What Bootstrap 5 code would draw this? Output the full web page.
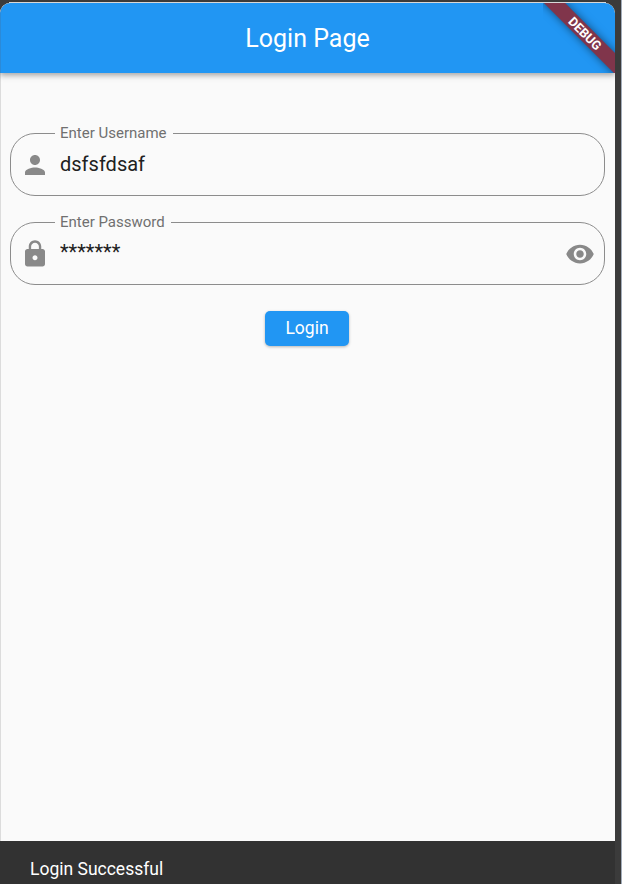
<!DOCTYPE html>
<html lang="en">
<head>
<meta charset="utf-8">
<meta name="viewport" content="width=device-width, initial-scale=1">
<title>Login Page</title>
<link href="https://cdn.jsdelivr.net/npm/bootstrap@5.3.0/dist/css/bootstrap.min.css" rel="stylesheet">
<style>
  html, body { height: 100%; }
  body { font-family: Roboto, "Liberation Sans", sans-serif; background: #3b3b3b; border-right: 1px solid #a3adba; padding: 2px 6px 0 0; line-height: 1.2; }
  .app-window { background: linear-gradient(90deg, transparent 9px, #d8d8d8 9px, #d8d8d8 calc(100% - 9px), transparent calc(100% - 9px)) top / 100% 1px no-repeat; padding-top: 1px; }
  .app-page { background: #fafafa; border-radius: 10px 10px 0 0; box-shadow: inset 1px 0 #dcdcdc; }
  .app-bar { height: 70px; background: #2196f3; border-radius: 10px 10px 0 0; box-shadow: 0 2px 5px rgba(0,0,0,.25), 0 4px 6px rgba(0,0,0,.1); border-left: 1px solid #2b8ad8; }
  .app-title { font-size: 25px; font-weight: 400; padding: 2px 1px 0 0; }
  .debug-clip { width: 72px; height: 70px; border-top-right-radius: 10px; }
  .debug-band { width: 110px; height: 15px; left: -13px; top: 22.5px; transform: rotate(45deg); background: #80354b; box-shadow: 0 0 8px rgba(0,0,0,.5); font-size: 12.75px; font-weight: 700; line-height: 15px; }
  .login-form { padding: 60px 10px 0; }
  .field { height: 63px; border: 1px solid #8c8c8c; border-radius: 25px; padding: 0 9px; margin-bottom: 26px; }
  .field-label { left: 44px; top: -10px; padding: 0 6px 0 5px; font-size: 15px; line-height: 18px; color: #707070; background: #fafafa; }
  .field .form-control { font-size: 20px; line-height: 24px; color: #212121; border: 0; background: transparent; box-shadow: none; padding: 0 0 1px 10px; }
  .field #password { padding-bottom: 3px; }
  .field svg { width: 30px; height: 30px; fill: #898989; flex: none; position: relative; top: .5px; }
  .btn-login { width: 84px; height: 35px; margin-right: 1px; margin-top: -.5px; background: #2196f3; color: #fff; font-size: 17.5px; border-radius: 5px; box-shadow: 0 1px 3px rgba(0,0,0,.28); }
  .snack { height: 43px; background: #323232; padding: 18px 30px 0; font-size: 17.5px; line-height: 21px; }
</style>
</head>
<body>
<div class="app-window h-100">
  <div class="app-page h-100 d-flex flex-column overflow-hidden">
    <header class="app-bar position-relative d-flex align-items-center justify-content-center text-white flex-shrink-0">
      <h1 class="app-title m-0">Login Page</h1>
      <div class="debug-clip position-absolute top-0 end-0 overflow-hidden">
        <div class="debug-band position-absolute text-center">DEBUG</div>
      </div>
    </header>
    <main class="flex-grow-1">
      <form class="login-form">
        <div class="field position-relative d-flex align-items-center">
          <label class="field-label position-absolute" for="username">Enter Username</label>
          <svg viewBox="0 0 24 24"><path d="M12 12c2.210 0 4-1.790 4-4s-1.790-4-4-4-4 1.790-4 4 1.790 4 4 4zm0 2c-2.670 0-8 1.340-8 4v2h16v-2c0-2.660-5.330-4-8-4z"/></svg>
          <input id="username" class="form-control" type="text" value="dsfsfdsaf">
        </div>
        <div class="field position-relative d-flex align-items-center">
          <label class="field-label position-absolute" for="password">Enter Password</label>
          <svg viewBox="0 0 24 24"><path d="M18 8h-1V6c0-2.760-2.240-5-5-5S7 3.240 7 6v2H6c-1.100 0-2 .9-2 2v10c0 1.100.9 2 2 2h12c1.100 0 2-.9 2-2V10c0-1.100-.9-2-2-2zm-6 9c-1.100 0-2-.9-2-2s.9-2 2-2 2 .9 2 2-.9 2-2 2zm3.100-9H8.900V6c0-1.710 1.390-3.100 3.100-3.100s3.100 1.390 3.100 3.100v2z"/></svg>
          <input id="password" class="form-control" type="text" value="*******">
          <svg viewBox="0 0 24 24"><path d="M12 4.500C7 4.500 2.730 7.610 1 12c1.730 4.390 6 7.500 11 7.500s9.270-3.110 11-7.500c-1.730-4.390-6-7.500-11-7.500zM12 17c-2.760 0-5-2.240-5-5s2.240-5 5-5 5 2.240 5 5-2.240 5-5 5zm0-8c-1.660 0-3 1.340-3 3s1.340 3 3 3 3-1.340 3-3-1.340-3-3-3z"/></svg>
        </div>
        <div class="d-flex justify-content-center">
          <button type="button" class="btn btn-login border-0 p-0">Login</button>
        </div>
      </form>
    </main>
    <div class="snack text-white flex-shrink-0" role="status">Login Successful</div>
  </div>
</div>
<script src="https://cdn.jsdelivr.net/npm/bootstrap@5.3.0/dist/js/bootstrap.bundle.min.js"></script>
</body>
</html>
